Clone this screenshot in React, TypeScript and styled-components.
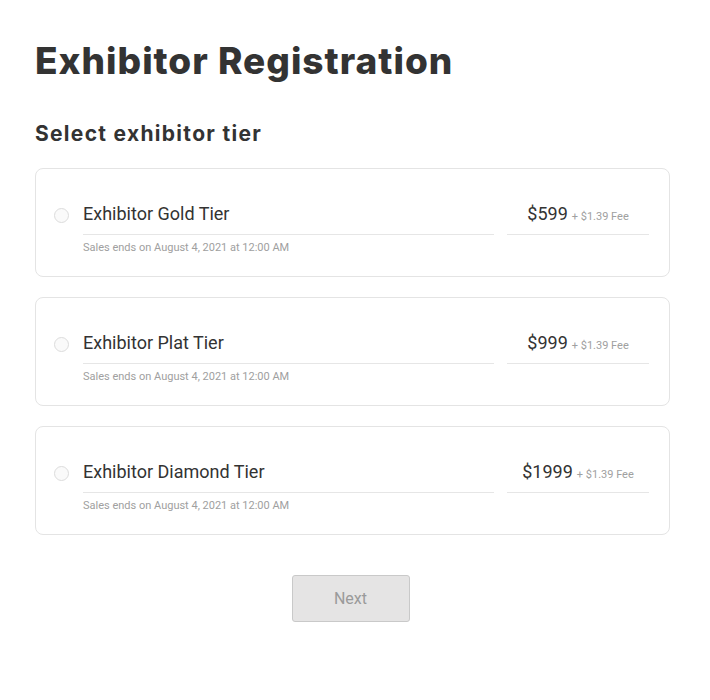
import React, { useState } from "react";
import styled, { createGlobalStyle } from "styled-components";

interface Tier {
  id: number;
  name: string;
  price: string;
  fee: string;
  salesEnd: string;
}

const tiers: Tier[] = [
  { id: 1, name: "Exhibitor Gold Tier", price: "$599", fee: "+ $1.39 Fee", salesEnd: "Sales ends on August 4, 2021 at 12:00 AM" },
  { id: 2, name: "Exhibitor Plat Tier", price: "$999", fee: "+ $1.39 Fee", salesEnd: "Sales ends on August 4, 2021 at 12:00 AM" },
  { id: 3, name: "Exhibitor Diamond Tier", price: "$1999", fee: "+ $1.39 Fee", salesEnd: "Sales ends on August 4, 2021 at 12:00 AM" },
];

const App: React.FC = () => {
  const [selected, setSelected] = useState<number | null>(null);

  return (
    <>
      <GlobalStyle />
      <Page>
        <Title>Exhibitor Registration</Title>
        <Subtitle>Select exhibitor tier</Subtitle>
        <TierList>
          {tiers.map((tier) => (
            <TierCard key={tier.id} onClick={() => setSelected(tier.id)}>
              <Radio $checked={selected === tier.id} />
              <TierMain>
                <TierName>{tier.name}</TierName>
                <SalesEnd>{tier.salesEnd}</SalesEnd>
              </TierMain>
              <PriceBox>
                <Price>{tier.price}</Price>
                <Fee>{tier.fee}</Fee>
              </PriceBox>
            </TierCard>
          ))}
        </TierList>
        <Footer>
          <NextButton disabled={selected === null}>Next</NextButton>
        </Footer>
      </Page>
    </>
  );
};

const GlobalStyle = createGlobalStyle`
  body {
    margin: 0;
    background: #ffffff;
    font-family: Roboto, "Liberation Sans", sans-serif;
  }
`;

const Page = styled.div`
  padding: 36px 40px 0 35px;
`;

const Title = styled.h1`
  margin: 0;
  font-family: Inter, "Liberation Sans", sans-serif;
  font-weight: 800;
  font-size: 37px;
  line-height: 50px;
  color: #333333;
  letter-spacing: 1px;
`;

const Subtitle = styled.h2`
  margin: 35px 0 0;
  font-family: Inter, "Liberation Sans", sans-serif;
  font-weight: 700;
  font-size: 21px;
  line-height: 26px;
  color: #333333;
  letter-spacing: 1.3px;
`;

const TierList = styled.div`
  display: flex;
  flex-direction: column;
  gap: 20px;
  margin-top: 21px;
`;

const TierCard = styled.div`
  display: flex;
  align-items: flex-start;
  height: 109px;
  box-sizing: border-box;
  padding: 32px 20px 0 18px;
  border: 1px solid #e4e4e4;
  border-radius: 8px;
  cursor: pointer;
`;

const Radio = styled.span<{ $checked: boolean }>`
  flex: none;
  width: 13px;
  height: 13px;
  margin-top: 7px;
  border-radius: 50%;
  border: 1px solid #dcdcdc;
  background: ${(p) => (p.$checked ? "#333" : "#fafafa")};
`;

const TierMain = styled.div`
  flex: 1;
  margin-left: 14px;
`;

const TierName = styled.div`
  font-size: 18px;
  line-height: 26px;
  color: #333333;
  padding-bottom: 7px;
  border-bottom: 1px solid #e6e6e6;
`;

const SalesEnd = styled.div`
  margin-top: 5px;
  font-size: 11px;
  line-height: 16px;
  color: #a0a0a0;
`;

const PriceBox = styled.div`
  flex: none;
  width: 142px;
  margin-left: 13px;
  display: flex;
  justify-content: center;
  align-items: baseline;
  gap: 4px;
  padding-bottom: 7px;
  border-bottom: 1px solid #e6e6e6;
`;

const Price = styled.span`
  font-size: 18px;
  line-height: 26px;
  color: #333333;
`;

const Fee = styled.span`
  font-size: 11px;
  color: #a0a0a0;
`;

const Footer = styled.div`
  display: flex;
  justify-content: center;
  margin-top: 40px;
  padding-right: 4px;
`;

const NextButton = styled.button`
  width: 118px;
  height: 47px;
  background: #e5e4e4;
  border: 1px solid #c9c9c9;
  border-radius: 3px;
  font-family: Roboto, "Liberation Sans", sans-serif;
  font-size: 16px;
  color: #9a9a9a;
  cursor: pointer;

  &:disabled {
    cursor: default;
  }
`;

export default App;
